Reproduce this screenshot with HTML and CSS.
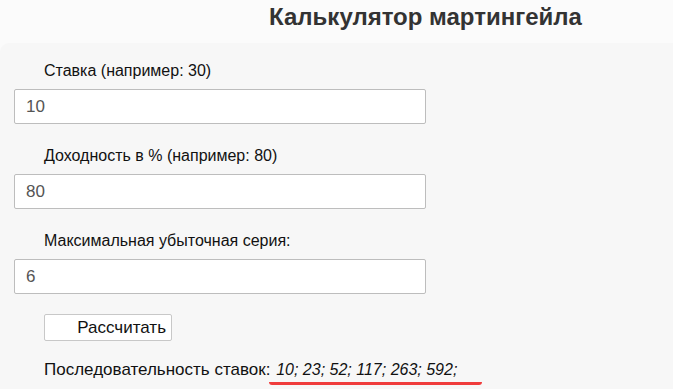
FILE: index.html
```html
<!DOCTYPE html>
<html lang="ru">
<head>
<meta charset="utf-8">
<title>Калькулятор мартингейла</title>
<link rel="stylesheet" href="styles.css">
</head>
<body>
<header class="head">
  <h1 class="title">Калькулятор мартингейла</h1>
</header>
<main class="panel">
  <div class="group">
    <label class="label">Ставка (например: 30)</label>
    <input class="field" type="text" value="10">
  </div>
  <div class="group">
    <label class="label">Доходность в % (например: 80)</label>
    <input class="field" type="text" value="80">
  </div>
  <div class="group">
    <label class="label">Максимальная убыточная серия:</label>
    <input class="field" type="text" value="6">
  </div>
  <button class="btn" type="button">Рассчитать</button>
  <p class="result">Последовательность ставок: <span class="seq">10; 23; 52; 117; 263; 592;</span></p>
</main>
</body>
</html>
```
FILE: styles.css
```css
html, body {
  margin: 0;
  padding: 0;
  background: #fbfbfb;
  font-family: "Liberation Sans", Arial, sans-serif;
  overflow: hidden;
}
.head {
  height: 43px;
  padding-left: 178px;
  text-align: center;
}
.title {
  margin: 0;
  padding-top: 3px;
  font-size: 24px;
  line-height: 28px;
  font-weight: bold;
  color: #333;
}
.panel {
  box-sizing: border-box;
  background: #f7f7f7;
  border-top-left-radius: 9px;
  padding: 19px 0 0 14px;
  height: 346px;
}
.group {
  display: flex;
  flex-direction: column;
  align-items: flex-start;
  margin-bottom: 23px;
}
.group:last-of-type {
  margin-bottom: 20px;
}
.label {
  margin-left: 30px;
  font-size: 16px;
  line-height: 17px;
  color: #111;
  margin-bottom: 10px;
}
.field {
  box-sizing: border-box;
  width: 412px;
  height: 35px;
  border: 1px solid #bdbdbd;
  border-radius: 2px;
  background: #fff;
  padding: 0 11px;
  font-family: "Liberation Sans", Arial, sans-serif;
  font-size: 17px;
  color: #555;
  outline: none;
}
.btn {
  display: block;
  box-sizing: border-box;
  margin-left: 30px;
  width: 128px;
  height: 27px;
  border: 1px solid #c8c8c8;
  border-radius: 2px;
  background: #fff;
  padding: 0 5px 0 0;
  text-align: right;
  font-family: "Liberation Sans", Arial, sans-serif;
  font-size: 17px;
  color: #111;
}
.result {
  margin: 19px 0 0 30px;
  font-size: 17px;
  line-height: 20px;
  color: #111;
}
.seq {
  display: inline-block;
  font-style: italic;
  font-size: 16px;
  padding: 0 25px 2px 7px;
  margin-left: -6px;
  border-bottom: 3px solid #f03c3c;
  border-radius: 0 0 3px 3px;
}
```
